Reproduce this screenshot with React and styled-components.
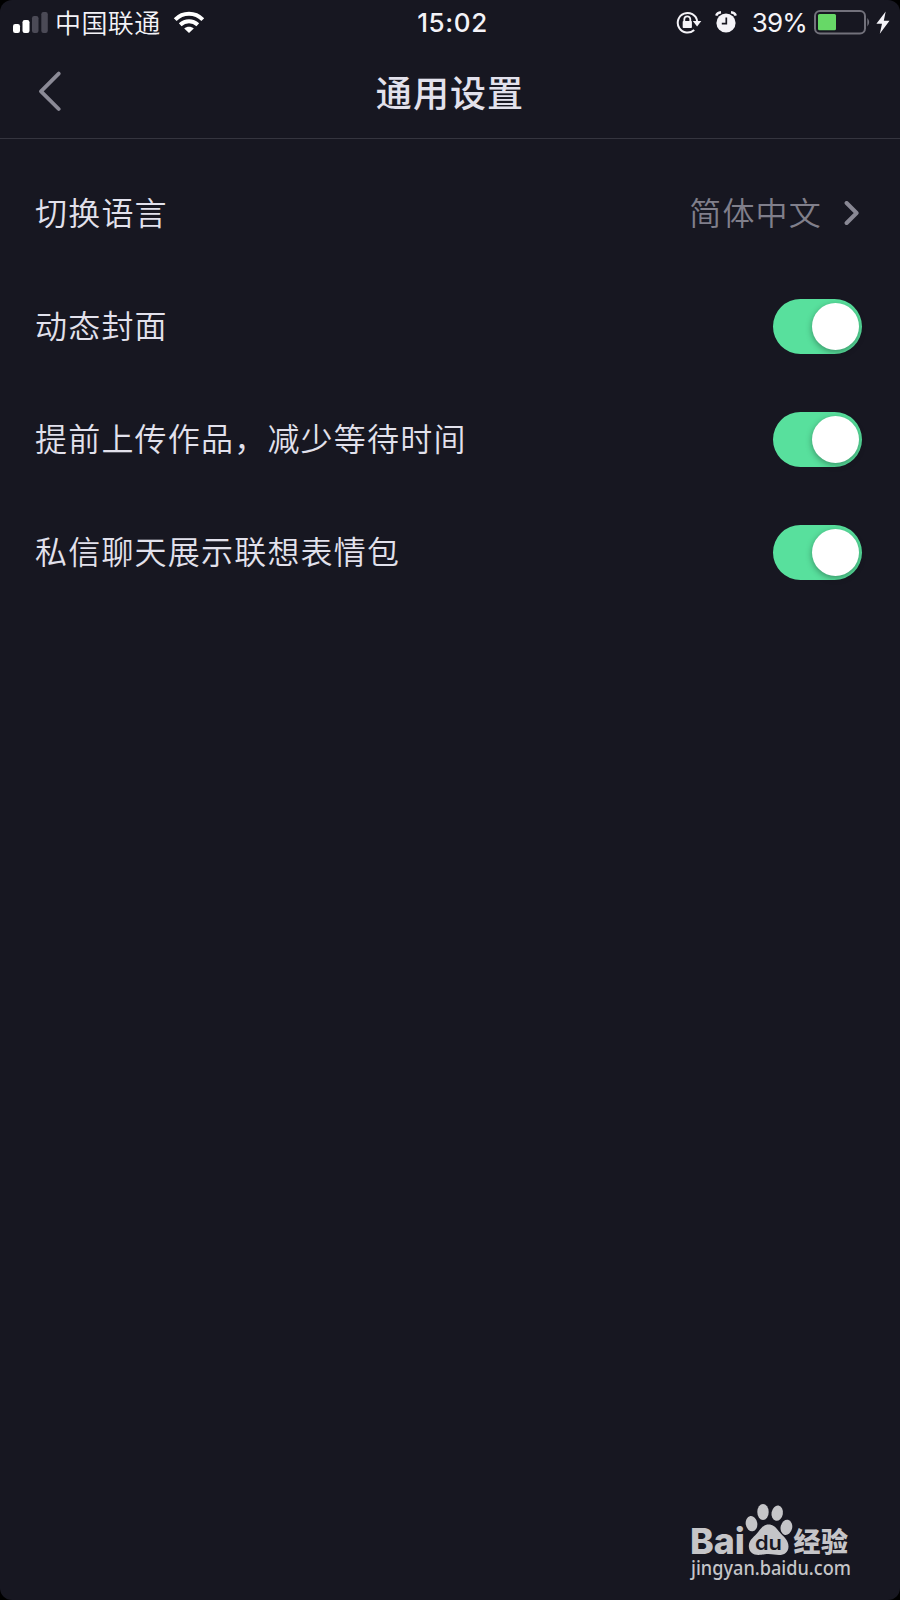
import { useState } from "react";
import styled, { createGlobalStyle } from "styled-components";

const options = [
  { id: "cover", label: "动态封面" },
  { id: "upload", label: "提前上传作品，减少等待时间" },
  { id: "stickers", label: "私信聊天展示联想表情包" },
];

function SignalIcon() {
  return (
    <svg width="36" height="24" viewBox="0 0 36 24">
      <rect x="0" y="13" width="7" height="9" rx="2.2" fill="#fff" />
      <rect x="9.5" y="9" width="7" height="13" rx="2.2" fill="#fff" />
      <rect x="19" y="5" width="6.5" height="17" rx="2.2" fill="#4b4a56" />
      <rect x="28.3" y="1" width="6.5" height="21" rx="2.2" fill="#4b4a56" />
    </svg>
  );
}

function WifiIcon() {
  return (
    <svg width="32" height="24" viewBox="0 0 32 24">
      <g fill="none" stroke="#fff" strokeWidth="4">
        <path d="M2.2 8.6 C10 0.8 22 0.8 29.8 8.6" />
        <path d="M7.2 13.8 C12.3 9 19.7 9 24.8 13.8" />
      </g>
      <path d="M16 22 L11.2 17.6 C13.8 15.2 18.2 15.2 20.8 17.6 Z" fill="#fff" />
    </svg>
  );
}

function RotationLockIcon() {
  return (
    <svg width="26" height="24" viewBox="0 0 26 24">
      <path d="M18.2 19 A9.8 9.8 0 1 1 21.2 10" fill="none" stroke="#f4f3f8" strokeWidth="2" />
      <path d="M16.8 10 H25.3 L21.1 15.5 Z" fill="#f4f3f8" />
      <rect x="6.7" y="10" width="9.2" height="7" rx="0.8" fill="#f4f3f8" />
      <path d="M8.3 10.5 V8.3 A3 3 0 0 1 14.3 8.3 V10.5" fill="none" stroke="#f4f3f8" strokeWidth="1.8" />
    </svg>
  );
}

function AlarmIcon() {
  return (
    <svg width="22" height="24" viewBox="0 0 22 24">
      <circle cx="11" cy="12" r="9.6" fill="#f4f3f8" />
      <path d="M1.2 4.6 Q2.2 1.6 6 1.2" fill="none" stroke="#f4f3f8" strokeWidth="2.4" />
      <path d="M20.8 4.6 Q19.8 1.6 16 1.2" fill="none" stroke="#f4f3f8" strokeWidth="2.4" />
      <path d="M11.3 6.5 V12.7 H6.8" fill="none" stroke="#171721" strokeWidth="1.7" />
    </svg>
  );
}

function BatteryIcon() {
  return (
    <svg width="58" height="26" viewBox="0 0 58 26">
      <rect x="1" y="1" width="50" height="22.6" rx="5" fill="none" stroke="#72717b" strokeWidth="2" />
      <rect x="4" y="4" width="18" height="16.2" rx="1.5" fill="#67d867" />
      <path d="M53.3 8 Q57.2 12.3 53.3 16.6 Z" fill="#72717b" />
    </svg>
  );
}

function BoltIcon() {
  return (
    <svg width="14" height="24" viewBox="0 0 14 24">
      <path d="M9.7 0.5 L0.4 12.7 H6 L3.8 22.7 L13.5 9.7 H7.8 Z" fill="#f4f3f8" />
    </svg>
  );
}

function BackIcon() {
  return (
    <svg width="26" height="42" viewBox="0 0 26 42">
      <path d="M21.7 2.6 L4 20.3 L21.7 38" fill="none" stroke="#8b8a96" strokeWidth="3.8" strokeLinecap="round" strokeLinejoin="round" />
    </svg>
  );
}

function ChevronIcon() {
  return (
    <svg width="16" height="26" viewBox="0 0 16 26">
      <path d="M2.6 2 L12.6 12 L2.6 22" fill="none" stroke="#898894" strokeWidth="4" strokeLinecap="round" strokeLinejoin="round" />
    </svg>
  );
}

function Logo() {
  return (
    <svg width="164" height="88" viewBox="0 0 164 88">
      <g fill="#c5c5c8">
        <LogoText x="1" y="50.5" fontSize="36" fontWeight="800" textLength="55" lengthAdjust="spacingAndGlyphs">Bai</LogoText>
        <ellipse cx="62.5" cy="20.7" rx="5.8" ry="7.7" transform="rotate(-9 62.5 20.7)" />
        <ellipse cx="74" cy="9" rx="5.7" ry="8" />
        <ellipse cx="88.2" cy="10.2" rx="5.7" ry="7.7" transform="rotate(10 88.2 10.2)" />
        <ellipse cx="97.4" cy="24.4" rx="5.8" ry="7.7" transform="rotate(12 97.4 24.4)" />
        <path d="M79.5 21.5 C84.5 21.5 87 24.5 90 28.5 C94 33.5 99.5 36.5 99.5 43.5 C99.5 49.5 95 52 90 52 C86 52 84 51 79.5 51 C75 51 73 52 69.5 52 C64 52 59.8 49 59.8 43 C59.8 36.5 66 33.5 69.5 28.5 C72.5 24.5 75 21.5 79.5 21.5 Z" />
        <CnLogoText x="104.5" y="48.8" fontSize="27" fontWeight="900" textLength="54.5">经验</CnLogoText>
        <SiteText x="2" y="72" fontSize="19.5" fontWeight="500" textLength="160" lengthAdjust="spacingAndGlyphs">jingyan.baidu.com</SiteText>
      </g>
      <LogoText x="66" y="47.3" fontSize="20" fontWeight="600" textLength="27" lengthAdjust="spacingAndGlyphs" fill="#171721">du</LogoText>
    </svg>
  );
}

function Toggle({ on, onClick, label }) {
  return (
    <Switch role="switch" aria-checked={on} aria-label={label} $on={on} onClick={onClick}>
      <Thumb />
    </Switch>
  );
}

function App() {
  const [settings, setSettings] = useState({
    cover: true,
    upload: true,
    stickers: true,
  });

  function handleToggle(id) {
    setSettings({ ...settings, [id]: !settings[id] });
  }

  return (
    <>
      <GlobalStyle />
      <Screen>
        <StatusBar>
          <StatusLeft>
            <SignalIcon />
            <Carrier>中国联通</Carrier>
            <WifiIcon />
          </StatusLeft>
          <Time>15:02</Time>
          <StatusRight>
            <RotationLockIcon />
            <AlarmIcon />
            <Percent>39%</Percent>
            <BatteryIcon />
            <BoltIcon />
          </StatusRight>
        </StatusBar>
        <Header>
          <BackButton aria-label="返回">
            <BackIcon />
          </BackButton>
          <Title>通用设置</Title>
        </Header>
        <List>
          <Row>
            <Label>切换语言</Label>
            <Value>
              <Label $muted>简体中文</Label>
              <ChevronIcon />
            </Value>
          </Row>
          {options.map((option) => (
            <Row key={option.id}>
              <Label>{option.label}</Label>
              <Toggle
                label={option.label}
                on={settings[option.id]}
                onClick={() => handleToggle(option.id)}
              />
            </Row>
          ))}
        </List>
        <Footer>
          <Logo />
        </Footer>
      </Screen>
    </>
  );
}

const GlobalStyle = createGlobalStyle`
  * {
    box-sizing: border-box;
  }

  body {
    margin: 0;
    background: #000;
    font-family: Inter, "Noto Sans CJK SC", sans-serif;
  }

  svg {
    display: block;
    flex-shrink: 0;
  }
`;

const Screen = styled.main`
  display: flex;
  flex-direction: column;
  width: 900px;
  height: 1600px;
  border-radius: 12px;
  overflow: hidden;
  background: #171721;
  color: #e2e1ec;
`;

const StatusBar = styled.div`
  display: grid;
  grid-template-columns: 1fr auto 1fr;
  align-items: center;
  height: 45px;
  padding: 0 10px 0 13px;
  color: #f4f3f8;
`;

const StatusLeft = styled.div`
  display: flex;
  align-items: center;
`;

const Carrier = styled.span`
  margin: 0 12px 0 6px;
  padding-bottom: 2px;
  font-family: "Noto Sans CJK SC", sans-serif;
  font-size: 26px;
  font-weight: 350;
  line-height: 42px;
  letter-spacing: 0.4px;
`;

const Time = styled.span`
  padding-left: 2px;
  font-size: 26px;
  font-weight: 500;
  letter-spacing: 0.6px;
`;

const StatusRight = styled.div`
  display: flex;
  align-items: center;
  justify-content: flex-end;

  svg:nth-child(2) {
    margin: 0 15px 0 13px;
  }

  svg:last-child {
    margin-left: 4px;
  }
`;

const Percent = styled.span`
  margin-right: 7px;
  font-size: 26px;
  letter-spacing: -0.8px;
`;

const Header = styled.header`
  display: grid;
  grid-template-columns: 1fr auto 1fr;
  align-items: center;
  height: 94px;
  padding: 0 36px;
  border-bottom: 1px solid #35353f;
`;

const BackButton = styled.button`
  width: 26px;
  margin-left: 1px;
  padding: 0;
  border: 0;
  background: none;
`;

const Title = styled.h1`
  margin: 0;
  padding-bottom: 2px;
  font-family: "Noto Sans CJK SC", sans-serif;
  font-size: 36px;
  font-weight: 500;
  line-height: 54px;
  letter-spacing: 1.1px;
`;

const List = styled.section`
  padding: 18px 38px 0 35px;
`;

const Row = styled.div`
  display: flex;
  align-items: center;
  justify-content: space-between;
  height: 113px;
`;

const Label = styled.span`
  padding-bottom: 6px;
  font-family: "Noto Sans CJK SC", sans-serif;
  font-size: 32px;
  font-weight: 350;
  line-height: 48px;
  letter-spacing: 1.2px;
  color: ${({ $muted }) => ($muted ? "#807f8b" : "inherit")};
`;

const Value = styled.div`
  display: flex;
  align-items: center;
  gap: 22px;
  padding-right: 2px;
`;

const Switch = styled.button`
  display: flex;
  align-items: center;
  justify-content: ${({ $on }) => ($on ? "flex-end" : "flex-start")};
  width: 89px;
  height: 55px;
  margin-bottom: 1px;
  padding: 0 3px 0 4px;
  border: 0;
  border-radius: 28px;
  background: ${({ $on }) => ($on ? "#58e09d" : "#393946")};
`;

const Thumb = styled.span`
  width: 47px;
  height: 47px;
  border-radius: 50%;
  background: #fff;
  box-shadow: 0 2px 6px rgba(0, 0, 0, 0.35);
`;

const Footer = styled.footer`
  display: flex;
  justify-content: flex-end;
  margin-top: auto;
  padding: 0 47px 9px 0;
`;

const LogoText = styled.text`
  font-family: Inter, sans-serif;
`;

const CnLogoText = styled.text`
  font-family: "Noto Sans CJK SC", sans-serif;
`;

const SiteText = styled.text`
  font-family: "Noto Sans", sans-serif;
`;

export default App;
